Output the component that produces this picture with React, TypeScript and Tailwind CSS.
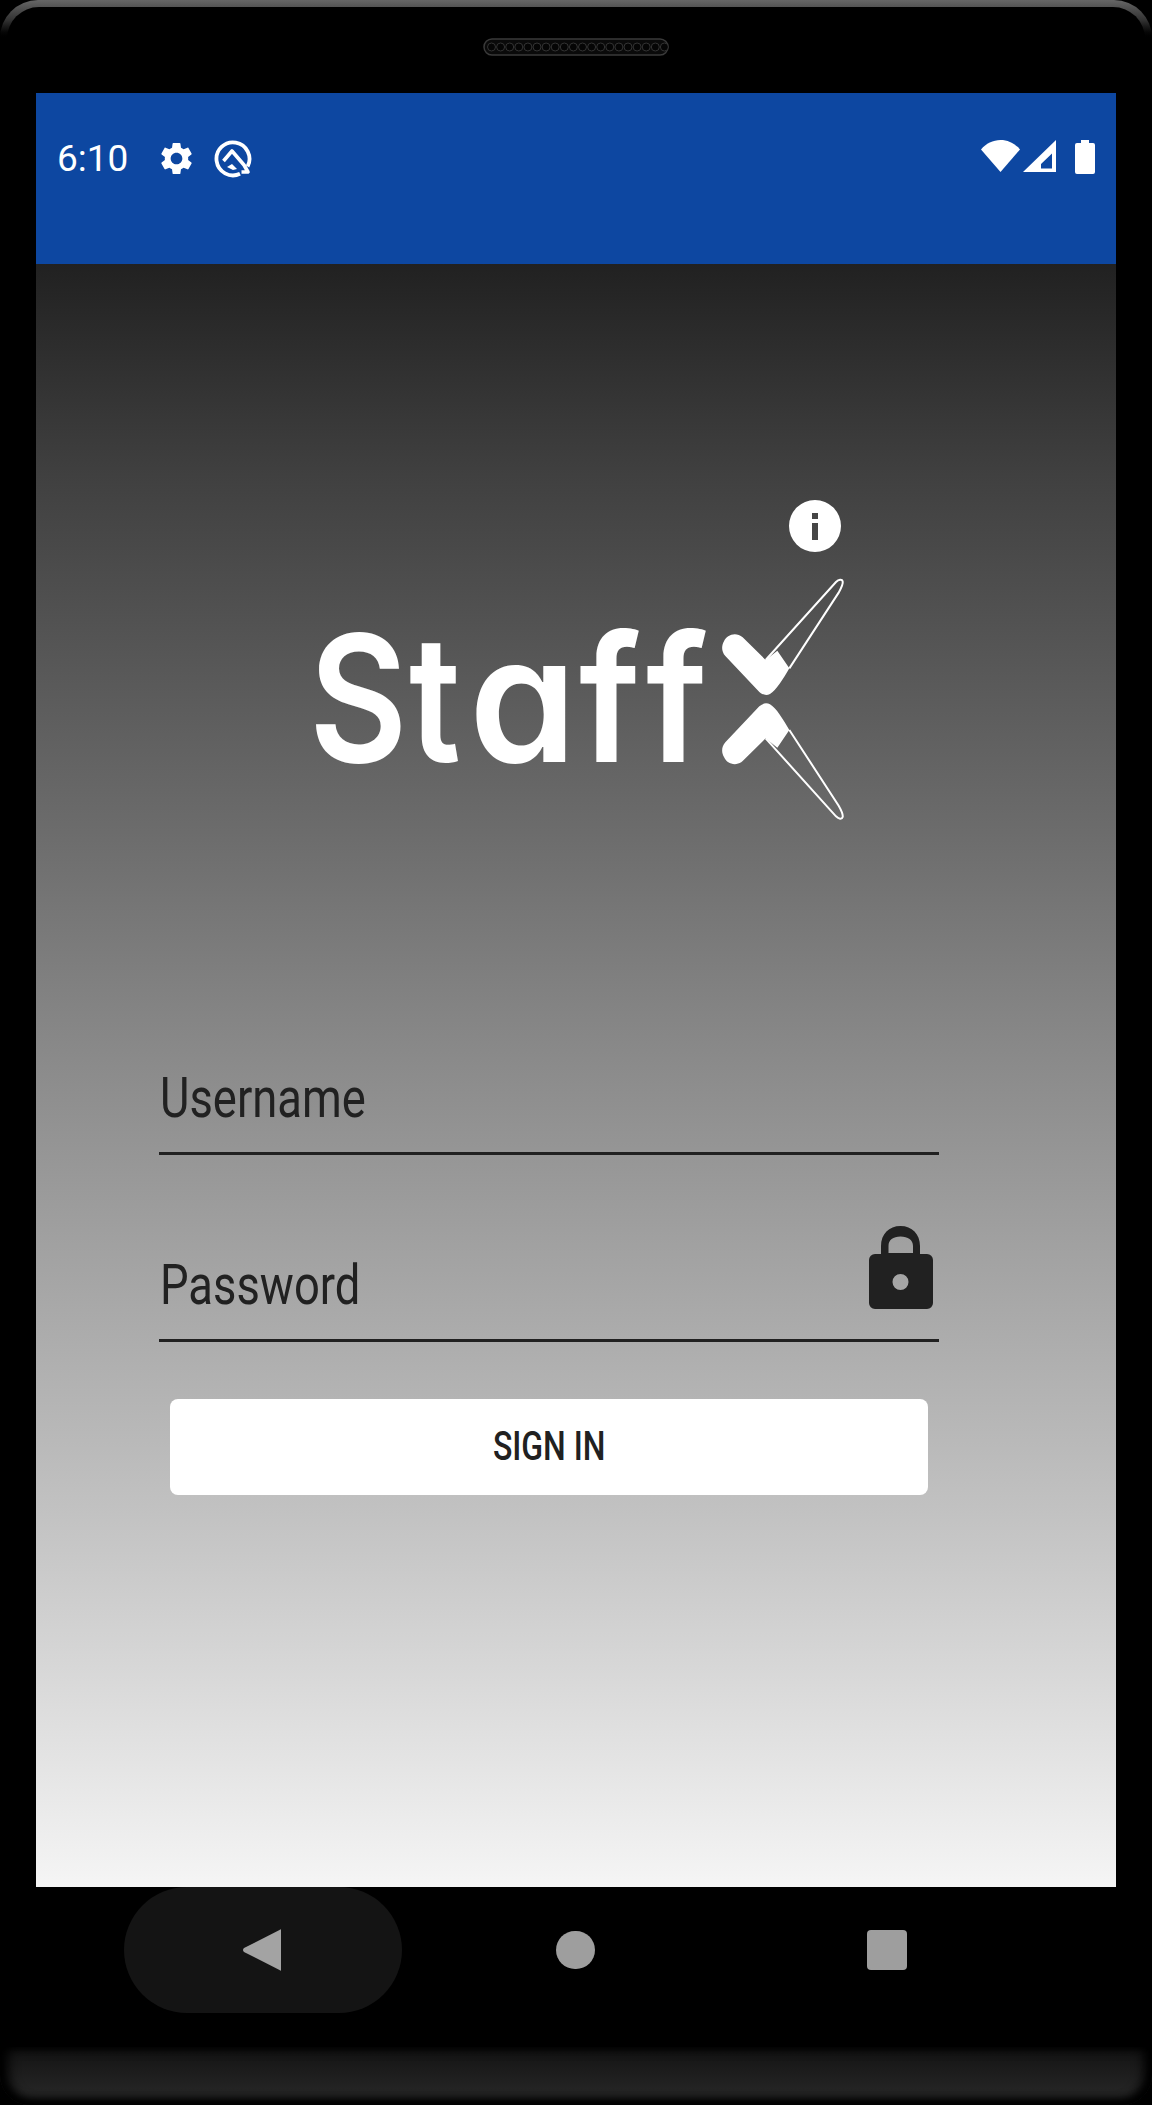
const speakerHoles = Array.from({ length: 20 }, (_, i) => i);

function Speaker() {
  return (
    <svg width="186" height="20" viewBox="0 0 186 20" className="block">
      <rect x="1" y="2" width="184" height="16" rx="8" fill="#0a0a0a" stroke="#3a3a3a" strokeWidth="1.5" />
      {speakerHoles.map((i) => (
        <circle key={i} cx={8.5 + i * 9.1} cy="10" r="4" fill="#050505" stroke="#333" strokeWidth="1" />
      ))}
    </svg>
  );
}

function StatusBar() {
  return (
    <div className="h-[171px] bg-[#0d47a1] flex items-start justify-between pt-[46px] pl-[21px] pr-[21px]">
      <div className="flex items-center">
        <span className="text-[37px] leading-[38px] text-white font-['Roboto',sans-serif] w-[100px]">6:10</span>
        <svg width="39" height="39" viewBox="0 0 24 24" fill="#fff" className="mr-[18px]">
          <path d="M19.14 12.94c.04-.3.06-.61.06-.94 0-.32-.02-.64-.07-.94l2.03-1.58c.18-.14.23-.41.12-.61l-1.92-3.32c-.12-.22-.37-.29-.59-.22l-2.39.96c-.5-.38-1.03-.7-1.62-.94l-.36-2.54c-.04-.24-.24-.41-.48-.41h-3.84c-.24 0-.43.17-.47.41l-.36 2.54c-.59.24-1.13.57-1.62.94l-2.39-.96c-.22-.08-.47 0-.59.22L2.74 8.87c-.12.21-.08.47.12.61l2.03 1.58c-.05.3-.09.63-.09.94s.02.64.07.94l-2.03 1.58c-.18.14-.23.41-.12.61l1.92 3.32c.12.22.37.29.59.22l2.39-.96c.5.38 1.03.7 1.62.94l.36 2.54c.05.24.24.41.48.41h3.84c.24 0 .44-.17.47-.41l.36-2.54c.59-.24 1.13-.56 1.62-.94l2.39.96c.22.08.47 0 .59-.22l1.92-3.32c.12-.22.07-.47-.12-.61l-2.01-1.58zM12 15.6c-1.98 0-3.6-1.62-3.6-3.6s1.62-3.6 3.6-3.6 3.6 1.62 3.6 3.6-1.62 3.6-3.6 3.6z" />
        </svg>
        <svg width="38" height="38" viewBox="0 0 38 38" fill="none">
          <path d="M26 33.8A16.5 16.5 0 1 1 33.6 26.5" stroke="#fff" strokeWidth="3.8" />
          <path d="M9.5 21 L18 11 L30 25 L34 32 L27.5 32" stroke="#fff" strokeWidth="3.6" strokeLinejoin="round" />
          <path d="M18 24 L23 29 L19 30 L13 27 Z" fill="#fff" />
        </svg>
      </div>
      <div className="flex items-start pt-[1px]">
        <svg width="39" height="32" viewBox="0 0 39 32" fill="#fff">
          <path d="M0 9.5C5 3.5 12 0 19.5 0S34 3.5 39 9.5L19.5 32Z" />
        </svg>
        <svg width="33" height="33" viewBox="0 0 33 33" className="ml-[3px]" fill="#fff" fillRule="evenodd">
          <path d="M33 0V32H0ZM29 13.5V28.5H18V24Z" />
        </svg>
        <svg width="20" height="34" viewBox="0 0 20 34" className="ml-[19px]" fill="#fff">
          <path d="M6 0h8v3h4a2 2 0 0 1 2 2v27a2 2 0 0 1-2 2H2a2 2 0 0 1-2-2V5a2 2 0 0 1 2-2h4Z" />
        </svg>
      </div>
    </div>
  );
}

function LogoMark() {
  const half = (
    <>
      <path
        d="M72 244 C80 224 108 214 128 232 L197 300 L232 272 L268 325 C250 356 228 392 210 402 C200 407 190 406 178 396 L76 288 C64 274 64 258 72 244 Z"
        fill="#fff"
      />
      <path
        d="M197 300 L408 66 C416 58 426 56 428 64 C430 72 424 84 416 98 L268 325"
        fill="none"
        stroke="#fff"
        strokeWidth="6"
      />
    </>
  );
  return (
    <svg width="160" height="340" viewBox="0 0 160 340" className="block shrink-0">
      <path
        fillRule="evenodd"
        fill="#fff"
        d="M115 10a26 26 0 1 0 0 52a26 26 0 1 0 0-52Z M112 23h6v6h-6Z M112 33h6v17h-6Z"
      />
      <g transform="translate(0 70) scale(0.33333)">
        {half}
        <g transform="translate(0 835) scale(1 -1)">{half}</g>
      </g>
    </svg>
  );
}

function LockIcon() {
  return (
    <svg width="64" height="84" viewBox="0 0 64 84" className="block">
      <path
        fillRule="evenodd"
        fill="#212121"
        d="M12 28V20C12 8 20 0 31.5 0S51 8 51 20V28H58a6 6 0 0 1 6 6V77a6 6 0 0 1-6 6H6a6 6 0 0 1-6-6V34a6 6 0 0 1 6-6ZM19.5 27H44V20C44 14 39 10.5 31.5 10.5S19.5 14 19.5 20Z M31.5 48a8 8 0 1 0 0 16a8 8 0 1 0 0-16Z"
      />
    </svg>
  );
}

export default function App() {
  return (
    <div className="w-[1152px] h-[2105px] bg-black flex flex-col overflow-hidden">
      {/* top bezel */}
      <div className="h-[93px] bg-black">
        <div className="h-[40px] rounded-t-[38px] bg-gradient-to-b from-[#666666] via-[#333333] to-black pt-[7px] px-[7px]">
          <div className="h-[33px] rounded-t-[32px] bg-black" />
        </div>
        <div className="flex justify-center -mt-[3px]">
          <Speaker />
        </div>
      </div>

      {/* screen */}
      <div className="mx-[36px] w-[1080px] h-[1794px] flex flex-col">
        <StatusBar />
        <div className="flex-1 bg-[linear-gradient(180deg,#212121_0%,#404040_13%,#585858_25%,#6c6c6c_35%,#888888_48%,#c2c2c2_77%,#f5f5f5_100%)] flex flex-col">
          {/* logo */}
          <div className="pt-[226px] pl-[273px] flex items-start">
            <div className="mt-[120px] w-[391px] flex text-white text-[176px] leading-[176px] font-semibold font-['Inter',sans-serif] [font-feature-settings:'cv11'] whitespace-nowrap">
              <span className="block w-[100px] origin-left scale-x-[.86]">S</span>
              <span className="block w-[60px] origin-left scale-x-[.83]">t</span>
              <span className="block w-[110px] origin-left scale-x-[.98]">a</span>
              <span className="block w-[67px] origin-left scale-x-[.9]">f</span>
              <span className="block w-[54px] origin-left scale-x-[.9]">f</span>
            </div>
            <LogoMark />
          </div>

          {/* form */}
          <div className="mt-[231px] ml-[123px] w-[780px] flex flex-col text-[#212121] font-['Roboto',sans-serif]">
            <div className="h-[94px] border-b-[3px] border-[#212121] flex items-end pb-[24px] pl-[1px]">
              <span className="inline-block origin-left scale-x-[.81] text-[56px] leading-[60px]">Username</span>
            </div>
            <div className="h-[187px] border-b-[3px] border-[#212121] flex items-end justify-between pb-[24px] pl-[1px] pr-[6px]">
              <span className="inline-block origin-left scale-x-[.81] text-[56px] leading-[60px]">Password</span>
              <div className="mb-[5px]">
                <LockIcon />
              </div>
            </div>
            <button className="mt-[57px] mx-[11px] h-[96px] rounded-[8px] bg-white flex items-center justify-center">
              <span className="inline-block scale-x-[.78] text-[41px] font-medium">SIGN IN</span>
            </button>
          </div>
        </div>
      </div>

      {/* nav bezel */}
      <div className="h-[160px] flex items-start">
        <div className="ml-[124px] w-[278px] h-[126px] rounded-full bg-[#141414] flex items-center justify-center">
          <svg width="38" height="42" viewBox="0 0 38 42" className="-ml-[2px]">
            <path d="M38 1V41Q38 42.5 36.5 41L1 23Q-1 21 1 19L36.5 1Q38 -.5 38 1Z" fill="#a3a3a3" />
          </svg>
        </div>
        <div className="ml-[154px] mt-[44px] w-[39px] h-[38px] rounded-full bg-[#9e9e9e]" />
        <div className="ml-[272px] mt-[43px] w-[40px] h-[40px] rounded-[4px] bg-[#9e9e9e]" />
      </div>

      {/* bottom bezel */}
      <div className="flex-1 rounded-b-[30px] bg-gradient-to-b from-[#131313] to-[#2a2a2a] shadow-[inset_0_-6px_8px_#000000,inset_8px_0_12px_#000000,inset_-8px_0_12px_#000000]" />
    </div>
  );
}
